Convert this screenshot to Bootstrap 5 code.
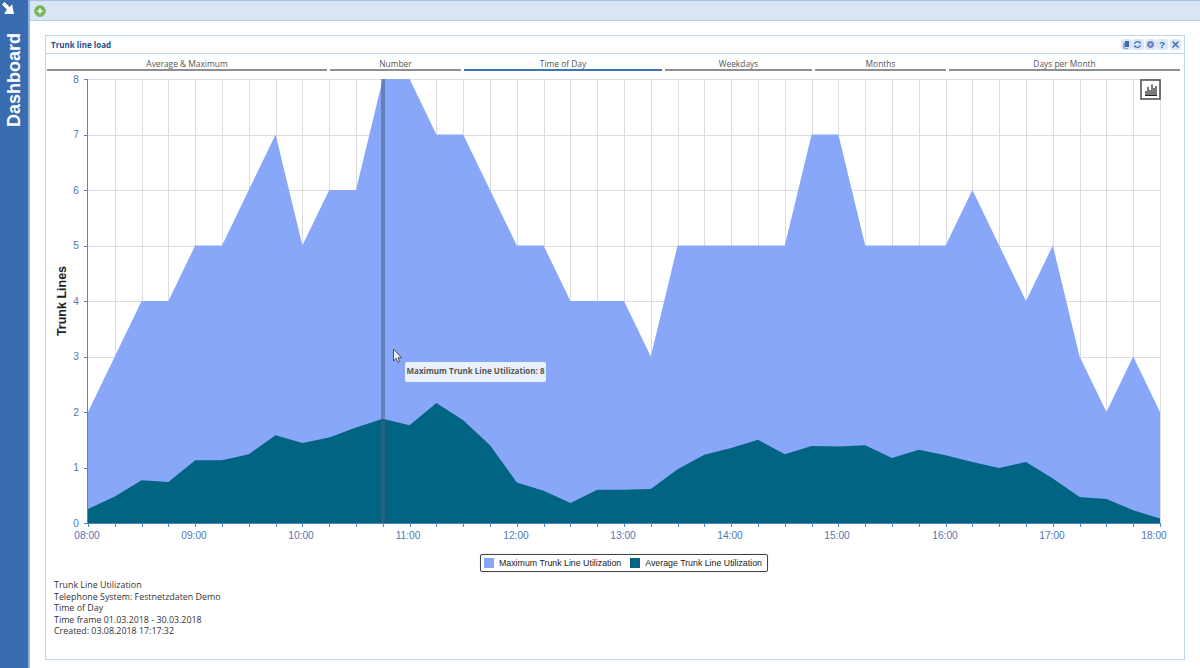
<!DOCTYPE html>
<html lang="en">
<head>
<meta charset="utf-8">
<title>Trunk line load</title>
<link href="https://cdn.jsdelivr.net/npm/bootstrap@5.3.0/dist/css/bootstrap.min.css" rel="stylesheet">
<style>
html,body{height:100%;overflow:hidden}
body{font-family:"Open Sans","Noto Sans",sans-serif;font-size:8.9px;color:#333;background:#fff}
.shell{height:668px}
.side{width:30px;background:#3a6cb2;border-right:2px solid #8fb2e0;color:#fff;flex:none}
.side-arrow{width:12px;height:12px;margin:2px 0 20px 2px;display:block}
.side-title{writing-mode:vertical-rl;transform:rotate(180deg);font:700 18px "Liberation Sans",sans-serif;line-height:28px;height:93px}
.topbar{height:21px;background:#d9e5f3;border-top:1px solid #a9c2e2;border-bottom:1px solid #b6cfee;padding-left:4px}
.addbtn{width:12px;height:12px}
.dash{padding:14px 15px 8px 15px;height:647px}
.pane{height:625px;border:1px solid #bcd5f3;background:#fff}
.pane-head{height:18px;border-bottom:1px solid #bcd5f3;padding:0 3px 0 5px}
.pane-title{font:700 8px "Open Sans",sans-serif;color:#1c4e92}
.tool{width:11.5px;height:11.5px;border-radius:3px;background:#dbe7f7;color:#3c69ab;font:700 9.5px/11.5px "Liberation Sans",sans-serif;text-align:center}
.tool svg{width:9px;height:9px;display:block;margin:1.2px}
.gap-tool{margin-left:1.5px}
.tabs{padding:4px 2px 0 1px;gap:3px}
.tabx{height:13px;border-bottom:2.5px solid #8f8f8f;text-align:center;color:#555;font-size:8.4px;line-height:11.5px;white-space:nowrap}
.tabx.on{border-bottom-color:#3f74b8}
.t1{width:280px}.t2{width:131px}.t3{width:198px}.t4{width:147px}.t5{width:131px}.t6{width:231px}
.plotwrap{height:481px;margin-top:2px}
.plot{display:block}
.axis-y,.axis-x{font:10.2px "Liberation Sans",sans-serif;fill:#4f78b4}
.axis-title{font:700 12.5px "Liberation Sans",sans-serif;fill:#222}
.tip{left:359px;top:289px;width:141px;height:20px;background:#eaf1fb;border-radius:2px;font:700 8px/17px "Open Sans",sans-serif;color:#555;text-align:center;white-space:nowrap}
.legend-box{margin-left:434px;width:288px;height:18px;border:1px solid #444;border-radius:2px;padding:0 3px;gap:9px;font:8.8px "Liberation Sans",sans-serif;color:#222;box-shadow:0 0 1px #999;white-space:nowrap}
.sw{width:10px;height:10px;margin-right:5px;flex:none}
.sw-max{background:#88a7f9}.sw-avg{background:#006482}
.notes{margin:7px 0 0 8px;line-height:11.5px;color:#333}
</style>
</head>
<body>
<div class="shell d-flex">
  <aside class="side d-flex flex-column align-items-center">
    <svg class="side-arrow align-self-start" viewBox="0 0 12 12"><path d="M0 2.6 2.6 0 7.6 5 10.2 2.4 12 12H2.2L4.8 7.4Z" fill="#fff"/></svg>
    <div class="side-title">Dashboard</div>
  </aside>
  <main class="flex-grow-1 d-flex flex-column">
    <div class="topbar d-flex align-items-center">
      <svg class="addbtn" viewBox="0 0 12 12"><circle cx="6" cy="6" r="5.5" fill="#6cb750" stroke="#8fb98a" stroke-width=".8"/><path d="M6 3.2V8.8M3.2 6H8.8" stroke="#fff" stroke-width="1.7"/></svg>
    </div>
    <div class="dash">
      <section class="pane d-flex flex-column">
        <header class="pane-head d-flex align-items-center justify-content-between">
          <span class="pane-title">Trunk line load</span>
          <div class="d-flex">
            <span class="tool"><svg viewBox="0 0 9 9"><path d="M3 1H7V7H3Z M1.5 2.5H2.5V8H6V8.5H1.5Z" fill="currentColor"/></svg></span>
            <span class="tool"><svg viewBox="0 0 9 9"><path d="M1.5 4A3 3 0 0 1 7 3M7.5 5A3 3 0 0 1 2 6" fill="none" stroke="currentColor" stroke-width="1.1"/><path d="M7.6 1V3.6H5ZM1.4 8V5.4H4Z" fill="currentColor"/></svg></span>
            <span class="tool gap-tool"><svg viewBox="0 0 9 9"><circle cx="4.5" cy="4.5" r="3" fill="#7c8fd0" stroke="#5a72bc" stroke-width="1"/><circle cx="4.5" cy="4.5" r="1" fill="#dbe7f7"/></svg></span>
            <span class="tool">?</span>
            <span class="tool gap-tool"><svg viewBox="0 0 9 9"><path d="M1.5 1.5 7.5 7.5M7.5 1.5 1.5 7.5" stroke="currentColor" stroke-width="1.4"/></svg></span>
          </div>
        </header>
        <nav class="tabs d-flex">
          <div class="tabx t1">Average &amp; Maximum</div>
          <div class="tabx t2">Number</div>
          <div class="tabx t3 on">Time of Day</div>
          <div class="tabx t4">Weekdays</div>
          <div class="tabx t5">Months</div>
          <div class="tabx t6">Days per Month</div>
        </nav>
        <div class="plotwrap position-relative">
          <svg class="plot" id="plot" width="1136" height="476" viewBox="46 73 1136 476" xmlns="http://www.w3.org/2000/svg">
            <g id="grid" stroke="#dcdcdc" stroke-width="1"></g>
            <polygon id="amax" fill="#88a7f9"></polygon>
            <polygon id="aavg" fill="#006482"></polygon>
            <rect x="381" y="79" width="4" height="444" fill="#4a5f7f" opacity=".55"></rect>
            <g id="ticks" stroke="#5a84c0" stroke-width="1"></g>
            <g id="ylab" class="axis-y" text-anchor="end">
              <text x="79" y="83">8</text><text x="79" y="138">7</text><text x="79" y="194">6</text><text x="79" y="249">5</text><text x="79" y="305">4</text><text x="79" y="360">3</text><text x="79" y="416">2</text><text x="79" y="471">1</text><text x="79" y="527">0</text>
            </g>
            <g class="axis-x" text-anchor="middle">
              <text x="87" y="539">08:00</text><text x="194" y="539">09:00</text><text x="301" y="539">10:00</text><text x="408" y="539">11:00</text><text x="516" y="539">12:00</text><text x="623" y="539">13:00</text><text x="730" y="539">14:00</text><text x="837" y="539">15:00</text><text x="945" y="539">16:00</text><text x="1052" y="539">17:00</text><text x="1154" y="539">18:00</text>
            </g>
            <text class="axis-title" text-anchor="middle" transform="translate(66 301) rotate(-90)">Trunk Lines</text>
            <rect x="1141" y="80" width="19" height="19" fill="#fff" stroke="#555" stroke-width="1.6"></rect>
            <path d="M1145 95.5H1157M1146 95V91M1148 95V87M1150 95V90M1152 95V84.5M1154 95V88M1156 95V86" stroke="#222" stroke-width="1.2" fill="none"></path>
            <path d="M393.5 349V361L396.2 358.4 398 362.4 399.8 361.6 398 357.8H401.6Z" fill="#e8eefa" stroke="#444" stroke-width=".9"></path>
          </svg>
          <div class="tip position-absolute">Maximum Trunk Line Utilization: 8</div>
        </div>
        <div class="legend-box d-flex align-items-center">
          <span class="d-flex align-items-center"><span class="sw sw-max"></span>Maximum Trunk Line Utilization</span>
          <span class="d-flex align-items-center"><span class="sw sw-avg"></span>Average Trunk Line Utilization</span>
        </div>
        <div class="notes">
          Trunk Line Utilization<br>
          Telephone System: Festnetzdaten Demo<br>
          Time of Day<br>
          Time frame 01.03.2018 - 30.03.2018<br>
          Created: 03.08.2018 17:17:32
        </div>
      </section>
    </div>
  </main>
</div>
<script>
(function(){
  var maxV=[2,3,4,4,5,5,6,7,5,6,6,8,8,7,7,6,5,5,4,4,4,3,5,5,5,5,5,7,7,5,5,5,5,6,5,4,5,3,2,3,2];
  var avgV=[.25,.48,.77,.74,1.13,1.13,1.24,1.58,1.44,1.54,1.72,1.88,1.76,2.16,1.85,1.4,.73,.58,.36,.6,.6,.61,.97,1.23,1.35,1.5,1.24,1.39,1.38,1.4,1.17,1.32,1.22,1.1,.99,1.1,.8,.47,.43,.23,.08];
  var X=function(i){return 88+i*26.8},Y=function(v){return 523-v*55.5};
  function pts(a){return '88,523 '+a.map(function(v,i){return X(i).toFixed(1)+','+Y(v).toFixed(1)}).join(' ')+' 1160,523'}
  document.getElementById('amax').setAttribute('points',pts(maxV));
  document.getElementById('aavg').setAttribute('points',pts(avgV));
  var g='',t='<line x1="87.5" y1="79" x2="87.5" y2="523"/><line x1="87" y1="523.5" x2="1160" y2="523.5"/>',i;
  for(i=1;i<=40;i++){g+='<line x1="'+(Math.round(X(i))+.5)+'" y1="79" x2="'+(Math.round(X(i))+.5)+'" y2="523"/>'}
  for(i=0;i<=40;i++){t+='<line x1="'+(Math.round(X(i))+.5)+'" y1="523" x2="'+(Math.round(X(i))+.5)+'" y2="527"/>'}
  for(i=0;i<=8;i++){var y=Math.round(Y(i))+.5;if(i>0)g+='<line x1="88" y1="'+y+'" x2="1160" y2="'+y+'"/>';t+='<line x1="84" y1="'+y+'" x2="88" y2="'+y+'"/>'}
  document.getElementById('grid').innerHTML=g;
  document.getElementById('ticks').innerHTML=t;
})();
</script>
<script src="https://cdn.jsdelivr.net/npm/bootstrap@5.3.0/dist/js/bootstrap.bundle.min.js"></script>
</body>
</html>
